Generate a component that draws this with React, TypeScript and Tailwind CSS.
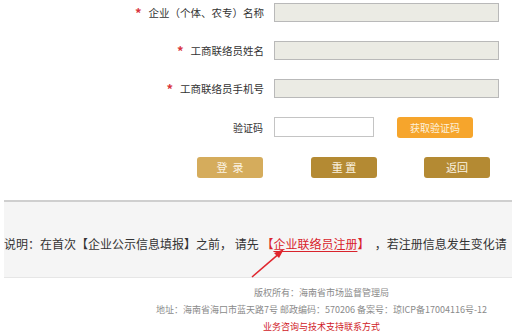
import React from "react";

const font = { fontFamily: '"Microsoft YaHei", "Noto Sans CJK SC", "Noto Sans", sans-serif' };

function Row({ label, star }: { label: string; star?: boolean }) {
  return (
    <div className="flex h-[19px] items-center">
      <div className="flex w-[264px] items-center justify-end text-[10.5px] text-[#333]">
        {star && <span className="mr-[7px] text-[13px] font-bold leading-none text-[#d9363e]">*</span>}
        <span>{label}</span>
      </div>
      <div className="ml-[10px] h-[19px] w-[225px] border border-[#b9b9b9] bg-[#ebebe4]" />
    </div>
  );
}

export default function App() {
  return (
    <div className="relative h-[336px] w-[517px] overflow-hidden bg-white" style={font}>
      <div className="flex flex-col gap-[19px] pt-[3px]">
        <Row label="企业（个体、农专）名称" star />
        <Row label="工商联络员姓名" star />
        <Row label="工商联络员手机号" star />
        <div className="flex h-[20px] items-center">
          <div className="w-[263px] text-right text-[10px] text-[#333]">验证码</div>
          <div className="ml-[11px] h-[20px] w-[100px] border border-[#c4c4c4] bg-white" />
          <div className="ml-[23px] flex h-[21px] w-[76px] items-center justify-center rounded-[3px] bg-[#f6a52c] text-[10px] text-[#fdf1dc]">
            获取验证码
          </div>
        </div>
      </div>
      <div className="mt-[20px] flex h-[21px] pl-[197px]">
        <div className="flex h-[21px] w-[66px] items-center justify-center rounded-[3px] bg-[#d5ac5c] text-[11px] text-[#fbf3e2]">
          登&nbsp;&nbsp;录
        </div>
        <div className="ml-[48px] flex h-[21px] w-[66px] items-center justify-center rounded-[3px] bg-[#b48a33] text-[11px] text-[#fbf3e2]">
          重 置
        </div>
        <div className="ml-[47px] flex h-[21px] w-[66px] items-center justify-center rounded-[3px] bg-[#b48a33] text-[11px] text-[#fbf3e2]">
          返回
        </div>
      </div>
      <div className="ml-[4px] mt-[22px] h-[78px] w-[508px] overflow-hidden border-t-2 border-b border-t-[#cfcfcf] border-b-[#e6e6e6] bg-[#f5f5f5] pt-[34px]">
        <div className="whitespace-nowrap text-[12px] leading-[16px] text-[#333]">
          说明：在首次【企业公示信息填报】之前，&nbsp;请先&nbsp;
          <span className="text-[#d9232c]">
            【<span className="underline underline-offset-2">企业联络员注册</span>】
          </span>
          &nbsp;&nbsp;，若注册信息发生变化请
        </div>
      </div>
      <div className="flex flex-col items-center pl-[126px] pt-[6px] text-[9px] leading-[17px] text-[#8a8a8a]">
        <div>版权所有：海南省市场监督管理局</div>
        <div className="whitespace-nowrap">地址：海南省海口市蓝天路7号 邮政编码：570206 备案号：琼ICP备17004116号-12</div>
        <div className="text-[#d0191f]">业务咨询与技术支持联系方式</div>
      </div>
      <svg className="absolute left-[248px] top-[246px]" width="40" height="36" viewBox="0 0 40 36">
        <line x1="4" y1="31" x2="33" y2="6" stroke="#e0262e" strokeWidth="1.6" />
        <polygon points="36,3 26,7 31,12" fill="#e0262e" />
      </svg>
    </div>
  );
}
